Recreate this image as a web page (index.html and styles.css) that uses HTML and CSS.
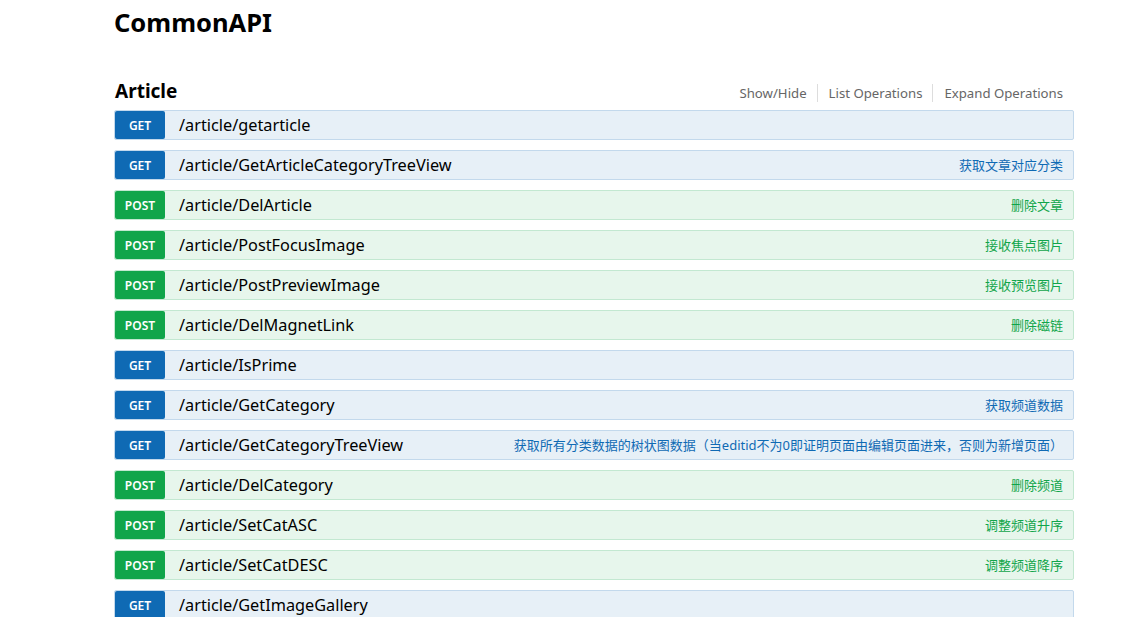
FILE: index.html
```html
<!DOCTYPE html>
<html lang="zh-CN">
<head>
<meta charset="utf-8">
<title>CommonAPI</title>
<link rel="stylesheet" href="styles.css">
</head>
<body>
<div class="page">
  <h1 class="title">CommonAPI</h1>
  <section class="resource">
    <div class="resource-head">
      <h2 class="resource-name">Article</h2>
      <ul class="options">
        <li>Show/Hide</li>
        <li>List Operations</li>
        <li>Expand Operations</li>
      </ul>
    </div>
    <ul class="ops">
      <li class="op get"><span class="verb">GET</span><span class="path">/article/getarticle</span><span class="desc"></span></li>
      <li class="op get"><span class="verb">GET</span><span class="path">/article/GetArticleCategoryTreeView</span><span class="desc">获取文章对应分类</span></li>
      <li class="op post"><span class="verb">POST</span><span class="path">/article/DelArticle</span><span class="desc">删除文章</span></li>
      <li class="op post"><span class="verb">POST</span><span class="path">/article/PostFocusImage</span><span class="desc">接收焦点图片</span></li>
      <li class="op post"><span class="verb">POST</span><span class="path">/article/PostPreviewImage</span><span class="desc">接收预览图片</span></li>
      <li class="op post"><span class="verb">POST</span><span class="path">/article/DelMagnetLink</span><span class="desc">删除磁链</span></li>
      <li class="op get"><span class="verb">GET</span><span class="path">/article/IsPrime</span><span class="desc"></span></li>
      <li class="op get"><span class="verb">GET</span><span class="path">/article/GetCategory</span><span class="desc">获取频道数据</span></li>
      <li class="op get"><span class="verb">GET</span><span class="path">/article/GetCategoryTreeView</span><span class="desc">获取所有分类数据的树状图数据（当editid不为0即证明页面由编辑页面进来，否则为新增页面）</span></li>
      <li class="op post"><span class="verb">POST</span><span class="path">/article/DelCategory</span><span class="desc">删除频道</span></li>
      <li class="op post"><span class="verb">POST</span><span class="path">/article/SetCatASC</span><span class="desc">调整频道升序</span></li>
      <li class="op post"><span class="verb">POST</span><span class="path">/article/SetCatDESC</span><span class="desc">调整频道降序</span></li>
      <li class="op get"><span class="verb">GET</span><span class="path">/article/GetImageGallery</span><span class="desc"></span></li>
    </ul>
  </section>
</div>
</body>
</html>
```
FILE: styles.css
```css
* { box-sizing: border-box; }
html, body { margin: 0; padding: 0; background: #fff; }
body {
  font-family: "Noto Sans", "Noto Sans CJK SC", sans-serif;
  color: #000;
  overflow: hidden;
}
.page {
  width: 960px;
  margin-left: 114px;
}
.title {
  margin: 0;
  padding-top: 4px;
  font-size: 25.5px;
  line-height: 36px;
  font-weight: 700;
  height: 74px;
}
.resource-head {
  display: flex;
  justify-content: space-between;
  align-items: flex-end;
  height: 36px;
  padding-bottom: 7px;
  padding-left: 1px;
}
.resource-name {
  margin: 0;
  font-size: 19px;
  line-height: 24px;
  font-weight: 700;
}
.options {
  list-style: none;
  margin: 0 0 1px 0;
  padding: 0 11px 0 0;
  display: flex;
  font-size: 13.2px;
  line-height: 18px;
  color: #666;
}
.options li {
  padding: 0 10px 0 11px;
  border-right: 1px solid #ddd;
}
.options li:last-child { border-right: none; padding-right: 0; }
.ops {
  list-style: none;
  margin: 0;
  padding: 0;
  display: flex;
  flex-direction: column;
  gap: 10px;
}
.op {
  display: flex;
  align-items: center;
  height: 30px;
  border: 1px solid;
  border-radius: 2px;
}
.op.get { background: #e7f0f7; border-color: #c3d9ec; }
.op.post { background: #e7f6ec; border-color: #c3e8d1; }
.verb {
  width: 50px;
  height: 28px;
  border-radius: 2px;
  color: #fff;
  font-size: 12px;
  font-weight: 600;
  line-height: 30px;
  text-align: center;
  flex: none;
}
.get .verb { background: #0f6ab4; }
.post .verb { background: #10a54a; }
.path {
  margin-left: 14px;
  font-size: 16.3px;
  line-height: 28px;
  flex: none;
}
.desc {
  margin-left: auto;
  padding-right: 10px;
  font-size: 13px;
  line-height: 28px;
}
.get .desc { color: #0f6ab4; }
.post .desc { color: #10a54a; }
```
